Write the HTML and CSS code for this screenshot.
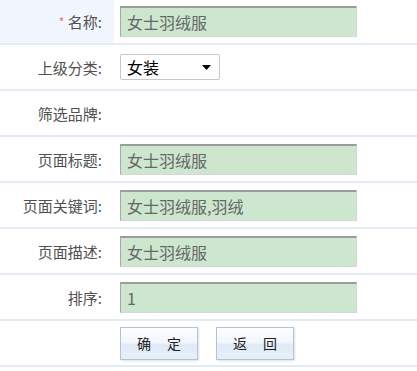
FILE: index.html
```html
<!DOCTYPE html>
<html lang="zh-CN">
<head>
<meta charset="utf-8">
<title>分类编辑</title>
<link rel="stylesheet" href="styles.css">
</head>
<body>
<form class="form">
  <div class="row row-first">
    <div class="label label-hl"><span class="req">*</span> 名称:</div>
    <div class="field"><input class="txt" type="text" value="女士羽绒服"></div>
  </div>
  <div class="row">
    <div class="label">上级分类:</div>
    <div class="field">
      <div class="select"><span>女装</span><svg class="arrow" width="9" height="5" viewBox="0 0 9 5"><path d="M0 0H9L4.5 5Z" fill="#000"/></svg></div>
    </div>
  </div>
  <div class="row">
    <div class="label">筛选品牌:</div>
    <div class="field"></div>
  </div>
  <div class="row">
    <div class="label">页面标题:</div>
    <div class="field"><input class="txt" type="text" value="女士羽绒服"></div>
  </div>
  <div class="row">
    <div class="label">页面关键词:</div>
    <div class="field"><input class="txt" type="text" value="女士羽绒服,羽绒"></div>
  </div>
  <div class="row">
    <div class="label">页面描述:</div>
    <div class="field"><input class="txt" type="text" value="女士羽绒服"></div>
  </div>
  <div class="row">
    <div class="label">排序:</div>
    <div class="field"><input class="txt" type="text" value="1"></div>
  </div>
  <div class="row">
    <div class="label"></div>
    <div class="field buttons">
      <button type="button" class="btn">确 定</button>
      <button type="button" class="btn">返 回</button>
    </div>
  </div>
</form>
</body>
</html>
```
FILE: styles.css
```css
* { box-sizing: border-box; }
html, body { margin: 0; padding: 0; background: #fff; }
body {
  font-family: "Noto Sans CJK SC", "Noto Sans", sans-serif;
  font-size: 14px;
  color: #555;
}
.form { display: flex; flex-direction: column; width: 417px; }
.row {
  display: flex;
  align-items: stretch;
  height: 46px;
  border-bottom: 2px solid #e2ebf6;
}
.row-first { height: 45px; }
.label {
  width: 114px;
  flex: none;
  display: flex;
  align-items: center;
  justify-content: flex-end;
  padding-right: 12px;
  font-size: 15px;
  color: #505050;
  white-space: pre;
}
.label-hl { background: #f1f6fe; }
.req { color: #f56b5a; font-size: 12px; }
.field {
  flex: 1;
  display: flex;
  align-items: center;
  padding-left: 6px;
}
.txt {
  width: 237px;
  height: 31px;
  margin: 0;
  padding: 0 0 0 6px;
  background: #cde7cf;
  border-style: solid;
  border-width: 2px 1px 1px 1px;
  border-color: #9c9c9c #d6d6d6 #d6d6d6 #a8a8a8;
  font-family: "Noto Sans CJK SC", "Noto Sans", sans-serif;
  font-size: 16px;
  color: #666;
  outline: none;
}
.select {
  width: 100px;
  height: 26px;
  border: 1px solid #c8c8c8;
  border-radius: 2px;
  background: #fff;
  display: flex;
  align-items: center;
  justify-content: space-between;
  padding: 0 8px 0 6px;
  font-size: 16px;
  color: #000;
}
.arrow { display: block; }
.buttons { gap: 18px; }
.btn {
  width: 78px;
  height: 33px;
  margin: 0;
  padding: 0;
  border: 1px solid #adc3dc;
  background: linear-gradient(to bottom, #fdfeff 0%, #f2f6fb 48%, #e0ebf8 52%, #e6eff9 100%);
  box-shadow: 1px 1px 2px rgba(0, 0, 0, 0.12);
  font-family: "Noto Sans CJK SC", "Noto Sans", sans-serif;
  font-size: 14px;
  color: #222;
  word-spacing: 13px;
  cursor: pointer;
}
```
